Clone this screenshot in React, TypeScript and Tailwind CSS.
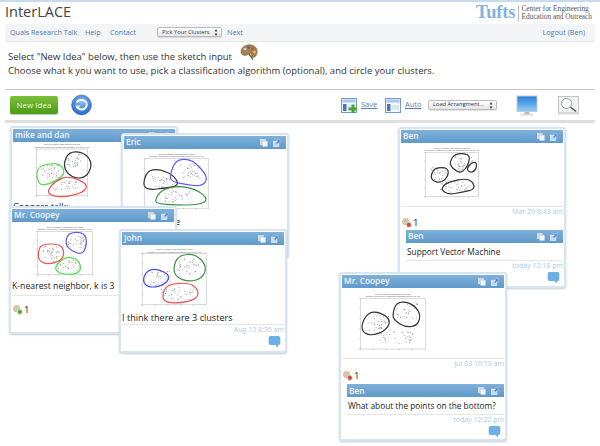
import React from "react";

const F = { fontFamily: '"Open Sans", sans-serif' };

function rng(seed: number) {
  let s = seed;
  return () => {
    s = (s * 9301 + 49297) % 233280;
    return s / 233280;
  };
}

function smooth(p: number[][]) {
  const n = p.length;
  let d = `M${(p[0][0] + p[n - 1][0]) / 2} ${(p[0][1] + p[n - 1][1]) / 2}`;
  for (let i = 0; i < n; i++) {
    const a = p[i];
    const b = p[(i + 1) % n];
    d += ` Q${a[0]} ${a[1]} ${(a[0] + b[0]) / 2} ${(a[1] + b[1]) / 2}`;
  }
  return d + "Z";
}

type Blob = { c: string; p: number[][] };

function Plot({ box, axes, blobs, seed, className }: { box: number[]; axes: number[]; blobs: Blob[]; seed: number; className?: string }) {
  const r = rng(seed);
  const [ax, ay, bx, by] = axes;
  const w = bx - ax;
  const h = by - ay;
  const dots: number[][] = [];
  const clusters = [
    [0.72, 0.25, 0.16, 0.15],
    [0.27, 0.48, 0.17, 0.15],
    [0.55, 0.78, 0.26, 0.12],
  ];
  for (const c of clusters) {
    for (let i = 0; i < 32; i++) {
      dots.push([ax + w * (c[0] + (r() - 0.5) * 2 * c[2]), ay + h * (c[1] + (r() - 0.5) * 2 * c[3])]);
    }
  }
  const ticks = [0, 0.2, 0.4, 0.6, 0.8, 1];
  return (
    <svg width={box[2] / 3} height={box[3] / 3} viewBox={box.join(" ")} className={className}>
      <text x={(ax + bx) / 2} y={ay - 11} textAnchor="middle" fontSize="7" fill="#555" fontFamily="Liberation Sans">Given a scatter with different colors</text>
      <text x={(ax + bx) / 2} y={ay - 3} textAnchor="middle" fontSize="7" fill="#555" fontFamily="Liberation Sans">Choose k's and the clustering algorithm set up to you</text>
      <rect x={ax} y={ay} width={w} height={h} fill="#fff" stroke="#b5b5b5" strokeWidth="1.5" />
      {ticks.map((t) => (
        <g key={t} stroke="#aaa" strokeWidth="1.5">
          <line x1={ax + w * t} x2={ax + w * t} y1={by} y2={by + 4} />
          <line x1={ax - 4} x2={ax} y1={ay + h * t} y2={ay + h * t} />
        </g>
      ))}
      {dots.map((d, i) => (
        <circle key={i} cx={d[0]} cy={d[1]} r="1.500" fill="#8a8a8a" />
      ))}
      {blobs.map((b, i) => (
        <path key={i} d={smooth(b.p)} fill="none" stroke={b.c} strokeWidth="3.600" />
      ))}
    </svg>
  );
}

function CopyIcon() {
  return (
    <svg width="8" height="8" viewBox="0 0 9 9">
      <rect x="0.500" y="0.500" width="5.500" height="6" fill="#d4d8dc" stroke="#e6eaee" strokeWidth="0.600" />
      <rect x="3" y="2.500" width="5.500" height="6" fill="#f4f5f6" stroke="#c4d0da" strokeWidth="0.500" />
    </svg>
  );
}

function ExpandIcon() {
  return (
    <svg width="8" height="8" viewBox="0 0 9 9">
      <rect x="0.700" y="2.500" width="5.800" height="5.800" fill="#c6d8ee" stroke="#eef3f9" strokeWidth="0.800" />
      <path d="M4 1h4v4L6.700 3.800 4.600 5.900 3.200 4.500l2.100-2.100z" fill="#4f84cf" stroke="#e8f0f8" strokeWidth="0.400" />
    </svg>
  );
}

function Header({ name }: { name: string }) {
  return (
    <div className="flex items-center justify-between h-[13px] pl-[2px] pr-[5px] bg-gradient-to-b from-[#7fb0da] to-[#5f9aca]">
      <span className="text-[8.300px] font-semibold text-[#f0f6fb] leading-none" style={F}>{name}</span>
      <span className="flex items-center gap-[5px]">
        <CopyIcon />
        <ExpandIcon />
      </span>
    </div>
  );
}

function Bubble() {
  return (
    <svg width="13" height="13" viewBox="0 0 13 13" className="block">
      <path d="M2.500 1h8A1.800 1.800 0 0 1 12.300 2.800v5.400A1.800 1.800 0 0 1 10.500 10H10l-.2 2.600L7.300 10H2.500A1.800 1.800 0 0 1 .7 8.200V2.800A1.800 1.800 0 0 1 2.500 1z" fill="#6cb0e6" />
    </svg>
  );
}

function Rel({ x }: { x: string }) {
  return (
    <svg width="10" height="10" viewBox="0 0 11 11" className="block">
      <circle cx="4" cy="4" r="3.500" fill="#f2c98c" stroke="#d49a5a" strokeWidth="0.600" />
      <circle cx="4.500" cy="4.500" r="2.200" fill="#a9cdea" />
      <circle cx="7.500" cy="7.500" r="2.800" fill={x} stroke="#dfe9ef" strokeWidth="0.800" />
    </svg>
  );
}

function Card({ className, children }: { className: string; children: React.ReactNode }) {
  return (
    <div className={`absolute w-[168px] bg-white border-[2px] border-[#d7e5f1] rounded-[3px] p-[1px] shadow-[0_1px_2px_rgba(120,140,160,0.45)] ${className}`}>
      {children}
    </div>
  );
}

function Stamp({ t }: { t: string }) {
  return <div className="text-right text-[7px] leading-[10px] text-[#a9cbe6] border-t border-[#e6e6e6] h-[11px] whitespace-nowrap" style={F}>{t}</div>;
}

function Body({ children, className }: { children: React.ReactNode; className?: string }) {
  return <div className={`leading-[13px] text-[#222] whitespace-nowrap ${className || "text-[9.100px]"}`} style={F}>{children}</div>;
}

function Count({ color }: { color: string }) {
  return (
    <div className="flex items-end gap-[1px] pl-[1px] text-[9.500px] leading-[11px] text-[#222]" style={F}>
      <Rel x={color} />
      <span>1</span>
    </div>
  );
}

function Reply({ name, text, time }: { name: string; text: string; time: string }) {
  return (
    <div className="ml-[5px]">
      <Header name={name} />
      <div className="text-[8.300px] leading-[13px] text-[#222] whitespace-nowrap py-[2px] pl-[1px]" style={F}>{text}</div>
      <Stamp t={time} />
    </div>
  );
}

function Palette() {
  return (
    <svg width="18" height="17" viewBox="0 0 18 17" className="block">
      <path d="M1 8C1 3 6 .6 10 .8c4 .2 7.400 3 7.200 7-.2 3.500-2.400 6.200-4.400 5.200-1.600-.8-.4-3-2.400-3.300C8 9.400 7 12 4.500 11.500 2.500 11 1 10 1 8z" fill="#a9814f" stroke="#6e5230" strokeWidth="0.500" />
      <circle cx="5" cy="5" r="1.300" fill="#d9d9d0" />
      <circle cx="8.500" cy="3.500" r="1.200" fill="#3a66b8" />
      <circle cx="12.500" cy="4.500" r="1.200" fill="#cf3b2f" />
      <circle cx="14.500" cy="8" r="1.200" fill="#e8d060" />
      <path d="M9 10l4 5.500" stroke="#4a7a3a" strokeWidth="1.300" />
      <circle cx="12" cy="12.500" r="1" fill="#d03c70" />
    </svg>
  );
}

function Refresh() {
  return (
    <svg width="21" height="22" viewBox="0 0 22 22" className="block">
      <defs>
        <radialGradient id="rf" cx="50%" cy="35%" r="70%">
          <stop offset="0%" stopColor="#8cc0f2" />
          <stop offset="100%" stopColor="#1c5fc0" />
        </radialGradient>
      </defs>
      <circle cx="11" cy="11" r="10.400" fill="url(#rf)" stroke="#2a6cc8" strokeWidth="0.600" />
      <path d="M6 8.500C8 5 14 4.800 16 8.500c1.500 3.200-.5 7-4.500 7.200-2 0-3.500-.8-4.500-2" fill="none" stroke="#fff" strokeWidth="2" />
      <path d="M4.500 11.500l5 .2-3 3.800z" fill="#fff" />
    </svg>
  );
}

function WinIcon({ plus }: { plus?: boolean }) {
  return (
    <svg width="16" height="15" viewBox="0 0 16 15" className="block">
      <rect x="0.500" y="0.500" width="15" height="14" fill="#f4f7fb" stroke="#6f9ad0" />
      <rect x="1.500" y="1.500" width="13" height="3" fill="#a9c6e8" />
      <rect x="2" y="6" width="3.500" height="7" fill="#3f7ac4" />
      <rect x="7" y="7" width="7" height="5" fill="#dfe6ee" />
      {plus && <path d="M10.500 6.500h3v3h3v3h-3v3h-3v-3h-3v-3h3z" fill="#46a832" />}
    </svg>
  );
}

function Monitor() {
  return (
    <svg width="22" height="21" viewBox="0 0 22 21" className="block">
      <defs>
        <linearGradient id="mn" x1="0" y1="0" x2="0" y2="1">
          <stop offset="0%" stopColor="#2a80d8" />
          <stop offset="100%" stopColor="#8ecdf8" />
        </linearGradient>
      </defs>
      <rect x="0.500" y="0.500" width="21" height="16.500" fill="#c6c9cc" />
      <rect x="1.500" y="1.500" width="19" height="14.500" fill="url(#mn)" />
      <rect x="8.500" y="17" width="5" height="2" fill="#bbb" />
      <rect x="5" y="19" width="12" height="1.500" fill="#d5d5d5" />
    </svg>
  );
}

function Magnifier() {
  return (
    <svg width="21" height="19" viewBox="0 0 21 19" className="block">
      <rect x="0.500" y="0.500" width="20" height="17" fill="#f2f2f2" stroke="#c4c4c4" />
      <rect x="0.500" y="16" width="20" height="2.500" fill="#d8d8d8" />
      <circle cx="8.500" cy="7.500" r="5" fill="#fbfdff" stroke="#8d9296" strokeWidth="0.900" />
      <path d="M12.500 11l5.500 4.500" stroke="#555" strokeWidth="1.600" />
    </svg>
  );
}

function Select({ label, className }: { label: string; className: string }) {
  return (
    <div className={`flex items-center justify-between h-[10px] bg-gradient-to-b from-white to-[#e6e6e6] border border-[#bcbcbc] rounded-[2px] pl-[4px] pr-[3px] shadow-[0_1px_1px_rgba(0,0,0,0.12)] ${className}`}>
      <span className="text-[5.700px] text-[#333] leading-none whitespace-nowrap" style={F}>{label}</span>
      <svg width="4" height="7" viewBox="0 0 4 7"><path d="M2 0l1.500 2.500h-3zM2 7L.5 4.500h3z" fill="#444" /></svg>
    </div>
  );
}

function ToolLink({ plus, label, w }: { plus?: boolean; label: string; w: string }) {
  return (
    <div className={`flex items-center gap-[4px] ${w}`}>
      <WinIcon plus={plus} />
      <span className="text-[7.500px] underline text-[#5b7fa8]" style={F}>{label}</span>
    </div>
  );
}

export default function App() {
  return (
    <div className="relative w-[600px] h-[446px] overflow-hidden bg-white border-t-[2px] border-[#c6dcee]" style={F}>
      <header className="flex items-center justify-between h-[21px] pl-[5px] pr-[8px]">
        <h1 className="text-[14.500px] leading-none text-[#444] font-normal" style={F}>InterLACE</h1>
        <div className="flex items-center gap-[3px] h-[20px] pt-[1px]">
          <div className="flex flex-col items-center w-[38px]">
            <span className="text-[18.500px] leading-[14px] font-bold text-[#85b1e0] tracking-[-0.200px]" style={{ fontFamily: '"Liberation Serif", serif' }}>Tufts</span>
            <span className="text-[2.500px] leading-[3px] tracking-[1px] text-[#a9c6e6]" style={{ fontFamily: '"Liberation Serif", serif' }}>UNIVERSITY</span>
          </div>
          <div className="border-l border-[#bbb] pl-[2px] ml-[1px] text-[7.300px] leading-[8px] text-[#555] whitespace-nowrap" style={{ fontFamily: '"Liberation Serif", serif' }}>
            <div>Center for Engineering</div>
            <div>Education and Outreach</div>
          </div>
        </div>
      </header>
      <nav className="flex items-center justify-between h-[18px] mx-[5px] bg-[#f2f4f5] border-b border-[#e8e8e8] text-[7.200px] text-[#4b7cae] mt-[1px]" style={F}>
        <div className="flex items-center pl-[5px]">
          <span className="w-[75px]">Quals Research Talk</span>
          <span className="w-[25px]">Help</span>
          <span className="w-[47px]">Contact</span>
          <Select label="Pick Your Clusters" className="w-[65px]" />
          <span className="ml-[5px]">Next</span>
        </div>
        <span className="pr-[10px]">Logout (Ben)</span>
      </nav>
      <section className="mx-[8px] h-[47px] pt-[3px] text-[9.500px] leading-[14px] text-[#333]" style={F}>
        <div className="flex items-end h-[19px]">
          <span>Select "New Idea" below, then use the sketch input</span>
          <span className="ml-[8px] mb-[3px]"><Palette /></span>
        </div>
        <div>Choose what k you want to use, pick a classification algorithm (optional), and circle your clusters.</div>
      </section>
      <div className="mx-[5px] flex items-center justify-between h-[31px] border-t border-[#c8c8c8]">
        <div className="flex items-center pl-[5px]">
          <button className="w-[48px] h-[18px] rounded-[2px] bg-gradient-to-b from-[#7cc03a] to-[#4c9c14] text-[8px] text-[#eef7e0] shadow-[0_1px_1px_rgba(0,0,0,0.25)]" style={F}>New Idea</button>
          <span className="ml-[13px]"><Refresh /></span>
        </div>
        <div className="flex items-center">
          <ToolLink plus label="Save" w="w-[44px]" />
          <ToolLink label="Auto" w="w-[43px]" />
          <Select label="Load Arrangment..." className="w-[69px]" />
          <span className="ml-[19px]"><Monitor /></span>
          <span className="ml-[20px] mr-[16px]"><Magnifier /></span>
        </div>
      </div>
      <div className="mx-[5px] h-[3px] bg-[#dedede]" />

      <div className="absolute inset-x-0 top-[122px] bottom-0">
        <Card className="left-[10px] top-[2px] h-[100px]">
          <Header name="mike and dan" />
          <Plot className="ml-[21px] mt-[2px]" box={[100, 70, 180, 165]} axes={[108, 85, 260, 225]} seed={11} blobs={[
            { c: "#333", p: [[188, 130], [205, 92], [250, 95], [275, 125], [262, 165], [230, 175], [200, 160]] },
            { c: "#4fe04f", p: [[106, 165], [115, 135], [175, 125], [195, 155], [170, 180], [120, 198]] },
            { c: "#f05050", p: [[140, 210], [165, 180], [205, 165], [262, 190], [250, 215], [190, 230], [150, 225]] },
          ]} />
          <Body className="mt-[1px] text-[9.100px]">Coopers talk:</Body>
        </Card>
        <Card className="left-[121px] top-[9px] h-[124px]">
          <Header name="Eric" />
          <Plot className="ml-[18px]" box={[420, 90, 210, 185]} axes={[428, 118, 620, 268]} seed={23} blobs={[
            { c: "#333", p: [[422, 200], [435, 155], [470, 150], [515, 168], [532, 200], [490, 207], [440, 213]] },
            { c: "#5a5af0", p: [[502, 175], [520, 122], [565, 120], [595, 145], [618, 178], [600, 202], [550, 197], [512, 188]] },
            { c: "#3e8e46", p: [[458, 245], [478, 212], [530, 200], [585, 212], [620, 242], [590, 258], [520, 258], [468, 254]] },
          ]} />
          <Body className="mt-[4px] text-[9.100px]">Clusters here</Body>
        </Card>
        <Card className="left-[9px] top-[82px] h-[128px]">
          <Header name="Mr. Coopey" />
          <Plot className="ml-[22px] mt-[2px]" box={[95, 70, 185, 160]} axes={[105, 92, 270, 222]} seed={37} blobs={[
            { c: "#f05050", p: [[107, 158], [115, 130], [175, 130], [186, 155], [178, 180], [135, 192], [110, 180]] },
            { c: "#5a5af0", p: [[188, 130], [198, 95], [248, 95], [254, 132], [240, 162], [208, 152]] },
            { c: "#4fe04f", p: [[158, 198], [185, 170], [222, 172], [238, 200], [226, 220], [185, 222], [163, 212]] },
          ]} />
          <Body className="mt-[3px] text-[8.700px] border-b border-[#e6e6e6] pb-[2px]">K-nearest neighbor, k is 3</Body>
          <div className="mt-[8px]"><Count color="#5aa832" /></div>
        </Card>
        <Card className="left-[119px] top-[105px] h-[124px]">
          <Header name="John" />
          <Plot className="ml-[17px] mt-[1px]" box={[410, 142, 210, 180]} axes={[420, 165, 612, 318]} seed={53} blobs={[
            { c: "#3e8e46", p: [[512, 208], [528, 170], [578, 165], [613, 200], [602, 238], [560, 250], [522, 236]] },
            { c: "#4a4af0", p: [[420, 247], [433, 216], [465, 210], [507, 232], [482, 262], [438, 267]] },
            { c: "#f05050", p: [[480, 287], [495, 256], [565, 252], [590, 277], [582, 302], [530, 314], [485, 310]] },
          ]} />
          <Body className="mt-[5px] text-[9.100px]">I think there are 3 clusters</Body>
          <Stamp t="Aug 13 8:36 am" />
          <div className="flex justify-end pr-[3px]"><Bubble /></div>
        </Card>
        <Card className="left-[398px] top-[3px] h-[161px]">
          <Header name="Ben" />
          <Plot className="ml-[21px] mt-[2px]" box={[95, 75, 180, 165]} axes={[105, 97, 265, 230]} seed={71} blobs={[
            { c: "#333", p: [[178, 125], [195, 100], [238, 102], [236, 128], [225, 148], [208, 160], [183, 142]] },
            { c: "#333", p: [[228, 147], [245, 126], [260, 128], [256, 152], [240, 158]] },
            { c: "#333", p: [[121, 167], [133, 143], [175, 143], [172, 172], [150, 189], [126, 182]] },
            { c: "#333", p: [[151, 207], [170, 186], [238, 173], [258, 207], [215, 217], [172, 224]] },
          ]} />
          <div className="mt-[6px]"><Stamp t="Mar 29 8:43 am" /></div>
          <div><Count color="#d24a3a" /></div>
          <div className="mt-[2px]"><Reply name="Ben" text="Support Vector Machine" time="today 12:18 pm" /></div>
          <div className="flex justify-end pr-[3px]"><Bubble /></div>
        </Card>
        <Card className="left-[339px] top-[148px] h-[169px]">
          <Header name="Mr. Coopey" />
          <Plot className="ml-[15px] mt-[1px]" box={[80, 72, 215, 190]} axes={[90, 100, 285, 252]} seed={89} blobs={[
            { c: "#333", p: [[93, 178], [113, 143], [147, 140], [182, 165], [167, 197], [125, 212], [98, 203]] },
            { c: "#333", p: [[186, 150], [198, 110], [242, 113], [272, 145], [262, 182], [225, 187], [193, 167]] },
          ]} />
          <div className="mt-[6px]"><Stamp t="Jul 03 10:13 am" /></div>
          <div className="mt-[1px]"><Count color="#d24a3a" /></div>
          <div className="mt-[3px]"><Reply name="Ben" text="What about the points on the bottom?" time="today 12:22 pm" /></div>
          <div className="flex justify-end pr-[3px]"><Bubble /></div>
        </Card>
      </div>
    </div>
  );
}
